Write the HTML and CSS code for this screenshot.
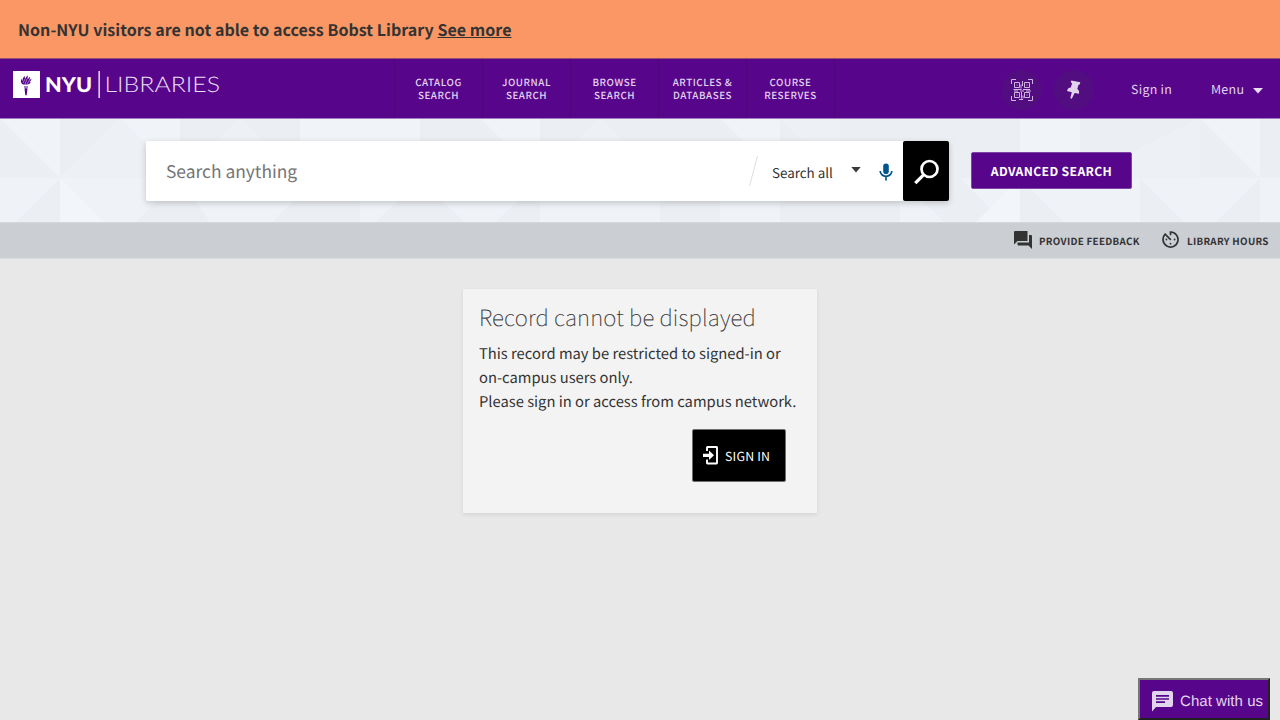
FILE: index.html
```html
<!DOCTYPE html>
<html lang="en">
<head>
<meta charset="utf-8">
<title>NYU Libraries</title>
<link rel="stylesheet" href="styles.css">
</head>
<body>
<div class="banner"><span>Non-NYU visitors are not able to access Bobst Library <a class="more">See more</a></span></div>
<header class="topbar">
  <svg class="logo" width="210" height="28" viewBox="0 0 210 28">
    <path fill="#fff" d="M0 0h27v27H0z"/>
    <path fill="#57068c" d="M9 12.4c-1.600-1.300-1.500-3.500.1-5 .1 1-.2 1.800.4 2.600.4-2 .2-3.300 2.400-5.200-.3 1.300-.2 2 .2 2.900.8-.9 1.200-1.900 2.700-3.400-.2 1.500.3 2.400-.5 3.800 1.100-.7 1.700-1.200 2.600-2.700.3 1.500-.1 2.700-.8 3.500.9-.1 1.700-.7 2.400-1.400-.1 1.400-.8 2.900-2.100 3.600l1.300-.2c-.5 1.400-1.800 2.400-3.300 2.700h-3.100c-1.400-.2-2.300-.7-2.800-1.700zM11 15.500h4v1h-4zM11.500 17.300h3l-.8 7h-1.400z"/>
    <path d="m10 12 2-4m0 5 2-5m0 5 2.500-4" stroke="#fff" stroke-width=".45"/>
    <text class="logo-nyu" x="32" y="21.300" textLength="47" lengthAdjust="spacingAndGlyphs">NYU</text>
    <path fill="#fff" d="M85.500 0h1.300v27h-1.300z"/>
    <text class="logo-lib" x="91.500" y="21.300" textLength="115.500" lengthAdjust="spacingAndGlyphs">LIBRARIES</text>
  </svg>
  <nav class="nav">
    <a>CATALOG<br>SEARCH</a><a>JOURNAL<br>SEARCH</a><a>BROWSE<br>SEARCH</a><a>ARTICLES &amp;<br>DATABASES</a><a>COURSE<br>RESERVES</a>
  </nav>
  <div class="user">
    <span class="round"><svg width="24" height="24" viewBox="0 0 24 24" fill="none" stroke="#cfb6df"><path d="M1.500 6V1.500H6M18 1.500h4.500V6M1.500 18v4.500H6M18 22.500h4.500V18"/><path d="M4.500 4.500h5v5h-5zM14.500 4.500h5v5h-5zM4.500 14.500h5v5h-5zM14.500 14.500h5v5h-5z"/><path d="M6.500 7h1M16.500 7h1M6.500 17h1M16.500 17h1M12.500 3v5M11 6.500v4M3.500 11.500h8M13 11.500h7M4 13h4M10 13h4M16 13h5M11.500 14v6.500M13 17.500v3M9 21.500h4"/></svg></span>
    <span class="round"><svg width="20" height="24" viewBox="0 0 20 24" fill="#e3d4ed"><path d="m7.300 2.500 9 1.800-.6 2.200-1.200.2-1.200 4.300c1.700 1.100 2.200 2.500 1.600 4.800l-4.300-.9-2.800 5.900-1.500-.5 1.500-6-4.800-1.200c.6-2.500 1.900-3.400 3.800-3.500l1.300-4.400-1.400-1z"/></svg></span>
    <a class="signin">Sign in</a>
    <a class="menu"><span class="label">Menu</span> <svg width="10" height="6" viewBox="0 0 10 6" fill="#eadff2"><path d="M0 0h10L5 5.500z"/></svg></a>
  </div>
</header>
<section class="search">
  <svg class="pattern" width="1280" height="104" viewBox="0 0 1280 104">
    <path fill="#ebeef3" d="M0 0h1280v60H0z"/>
    <path fill="#f0f4f9" d="M0 0h60v60zM120 0h60v60zM300 0h120v60H300zM480 0h60v60zM720 0h60v60zM1020 0h60v60h-60zM1200 0h60v60z"/>
    <path fill="#edf0f5" d="M60 60 120 0l60 60zM240 0l60 60H180zM600 0l60 60H540zM1080 60h120V0zM780 0h60v60z"/>
    <path fill="#ebeef3" d="M60 60v44H16zM180 60v44h-44zM180 60l30 44h-30zM300 75h60v29h-87zM420 60l44 44h-88zM540 60v44h-44zM660 60h60v44h-60zM780 60h120v44H780zM900 60h60l44 44h-60zM1020 60l44 44h-44zM1140 60l44 44h-44zM1260 60v44h-44z"/>
    <path fill="#f2f5fa" d="m1020 60-44 44h44zM60 60l44 44H60z"/>
  </svg>
  <div class="searchbox">
    <span class="placeholder">Search anything</span>
    <svg class="slash" width="9" height="30" viewBox="0 0 9 30" stroke="#dedede"><path d="M8.500 0 .5 30"/></svg>
    <span class="scope">Search all</span>
    <svg class="caret" width="10" height="6" viewBox="0 0 10 6" fill="#3a3a3a"><path d="M.3 0h9.400L5 5.500z"/></svg>
    <svg class="mic" width="14" height="18" viewBox="0 0 14 18"><rect x="4.200" y=".5" width="5.600" height="10.500" rx="2.800" fill="#00548e"/><path d="M1.200 8a5.800 5.300 0 0 0 11.600 0M7 13.200V17.500" fill="none" stroke="#00548e" stroke-width="1.700"/></svg>
    <span class="go"><svg width="28" height="28" viewBox="0 0 28 28" fill="none" stroke="#fff"><circle cx="17.500" cy="12" r="8" stroke-width="2.700"/><path d="M11.800 17.700 3.300 26.200" stroke-width="3.300"/></svg></span>
  </div>
  <a class="advanced">ADVANCED SEARCH</a>
</section>
<div class="subbar">
  <svg width="18" height="18" viewBox="0 0 18 18" fill="#333"><path d="M1 0h12.500v10H3.500L0 13.500V1a1 1 0 0 1 1-1zM15 4h2a1 1 0 0 1 1 1v13l-3.500-3.500H4.500a1 1 0 0 1-1-1v-2H15z"/></svg>
  <span class="feedback">PROVIDE FEEDBACK</span>
  <svg class="clock" width="17" height="17" viewBox="0 0 17 17"><path d="M8.500 4.200V1A7.500 7.500 0 1 1 3.200 3.200L8.800 8.800" fill="none" stroke="#333" stroke-width="1.700"/><g fill="#333"><circle cx="4.400" cy="8.500" r=".9"/><circle cx="12.600" cy="8.500" r=".9"/><circle cx="8.500" cy="12.700" r=".9"/></g></svg>
  <span class="hours">LIBRARY HOURS</span>
</div>
<main class="main">
  <article class="card">
    <h1 class="title">Record cannot be displayed</h1>
    <p class="message">This record may be restricted to signed-in or<br>on-campus users only.<br>Please sign in or access from campus network.</p>
    <a class="login"><svg width="16" height="19" viewBox="0 0 16 19"><path d="M4 5V1.500Q4 1 4.500 1H13.500Q14 1 14 1.500V17Q14 17.500 13.500 17.500H4.500Q4 17.500 4 17V13.500" fill="none" stroke="#fff" stroke-width="1.900"/><path fill="#fff" d="M0 7.700h6V4.500l5 4.800-5 4.800v-3.200H0z"/></svg><span>SIGN IN</span></a>
  </article>
</main>
<div class="chat"><svg width="21" height="21" viewBox="0 0 21 21"><path fill="#e3d4ed" d="M2 0h17a2 2 0 0 1 2 2v12a2 2 0 0 1-2 2H4l-4 4.500V2a2 2 0 0 1 2-2z"/><path d="M4 4.800h13M4 8h13M4 11.200h9" stroke="#57068c" stroke-width="1.700"/></svg><span>Chat with us</span></div>
</body>
</html>
```
FILE: styles.css
```css
* { box-sizing: border-box; }
body { margin: 0; width: 1280px; height: 720px; overflow: hidden; background: #e8e8e8; color: #333; font-family: "Noto Sans CJK SC", "Source Sans Pro", sans-serif; text-rendering: geometricPrecision; }
svg { display: block; flex: none; }
span, a { white-space: nowrap; }
.banner { height: 58px; padding: 0 18px 1px; background: #fa9764; display: flex; align-items: center; font-size: 16px; font-weight: 700; line-height: 24px; letter-spacing: .04px; }
.more { text-decoration: underline; }
.topbar { height: 61px; margin-bottom: -1px; background: #57068c; border-top: 1px solid #905472; border-bottom: 1px solid #a27abe; display: flex; color: #e3d4ed; position: relative; z-index: 1; }
.logo { margin: 12px 0 0 13px; }
.logo-nyu { font: 900 20.5px Lato, sans-serif; fill: #fff; }
.logo-lib { font: 300 21.5px Lato, sans-serif; fill: #eadff2; }
.nav { display: flex; margin-left: 171px; border-left: 1px solid #4e057e; }
.nav a { width: 88px; border-right: 1px solid #4e057e; padding-top: 17px; text-align: center; font-size: 9.8px; font-weight: 500; line-height: 13px; letter-spacing: .55px; }
.user { display: flex; align-items: center; margin-left: auto; padding: 2px 17px 0 0; font-size: 12.4px; letter-spacing: .3px; }
.round { width: 40px; height: 40px; margin-right: 12px; border-radius: 50%; background: #520d80; display: flex; align-items: center; justify-content: center; }
.signin { width: 80px; margin: -2px 0 0 25px; }
.menu { width: 52px; display: flex; align-items: center; justify-content: space-between; }
.label { margin-top: -2px; }
.menu svg { margin-top: 3px; }
.search { position: relative; height: 104px; background: #eff3f8; display: flex; align-items: flex-start; padding: 23px 0 0 146px; }
.pattern { position: absolute; left: 0; top: 0; }
.searchbox { position: relative; width: 803px; height: 60px; background: #fff; border-radius: 2px; box-shadow: 0 2px 6px rgba(0,0,0,.2); display: flex; align-items: center; padding-left: 20px; }
.placeholder { width: 583px; color: #757575; font-size: 17.4px; }
.scope { width: 79px; margin-left: 14px; padding-top: 1px; font-size: 13.4px; }
.caret { margin-top: -2px; }
.mic { margin: 2px 0 0 18px; }
.go { width: 46px; height: 60px; margin-left: auto; background: #000; border-radius: 2px; display: flex; align-items: center; justify-content: center; }
.advanced { position: relative; width: 161px; height: 37px; margin: 11px 0 0 22px; background: #57068c; border: 1px solid #7d45a5; border-radius: 2px; color: #fff; font-size: 12.2px; font-weight: 700; line-height: 36px; text-align: center; letter-spacing: .35px; }
.subbar { height: 37px; background: #cbced3; border-top: 1px solid #d5d8dd; border-bottom: 1px solid #d9dbde; display: flex; align-items: center; padding: 0 0 0 1014px; font-size: 9.8px; font-weight: 700; letter-spacing: .3px; }
.subbar svg { margin-top: -1px; }
.feedback { width: 123px; margin-left: 7px; }
.subbar .clock { margin: -2px 0 0; }
.hours { margin-left: 8px; }
.main { display: flex; justify-content: center; padding-top: 30px; }
.card { width: 354px; height: 224px; background: #f3f3f3; padding: 12px 16px; box-shadow: 0 2px 4px rgba(0,0,0,.08); display: flex; flex-direction: column; }
.title { margin: 0; font-size: 22.3px; font-weight: 100; line-height: 32px; letter-spacing: .18px; white-space: nowrap; -webkit-text-stroke: .15px #333; }
.message { margin: 9px 0 0; font-size: 14.75px; line-height: 24px; white-space: nowrap; }
.login { width: 94px; height: 53px; margin: 15px 15px 0 auto; background: #000; border: 1px solid #6e6e6e; border-radius: 2px; color: #fff; display: flex; align-items: center; padding-left: 10px; gap: 6px; font-size: 12.4px; letter-spacing: .2px; }
.chat { position: absolute; left: 1138px; top: 678px; width: 132px; height: 42px; background: #57068c; border: 2px solid; border-color: #767676 #212121 #212121 #767676; display: flex; align-items: center; gap: 7px; padding: 5px 0 0 12px; color: #e3d4ed; font: 15px "Liberation Sans", sans-serif; letter-spacing: .05px; }
```
